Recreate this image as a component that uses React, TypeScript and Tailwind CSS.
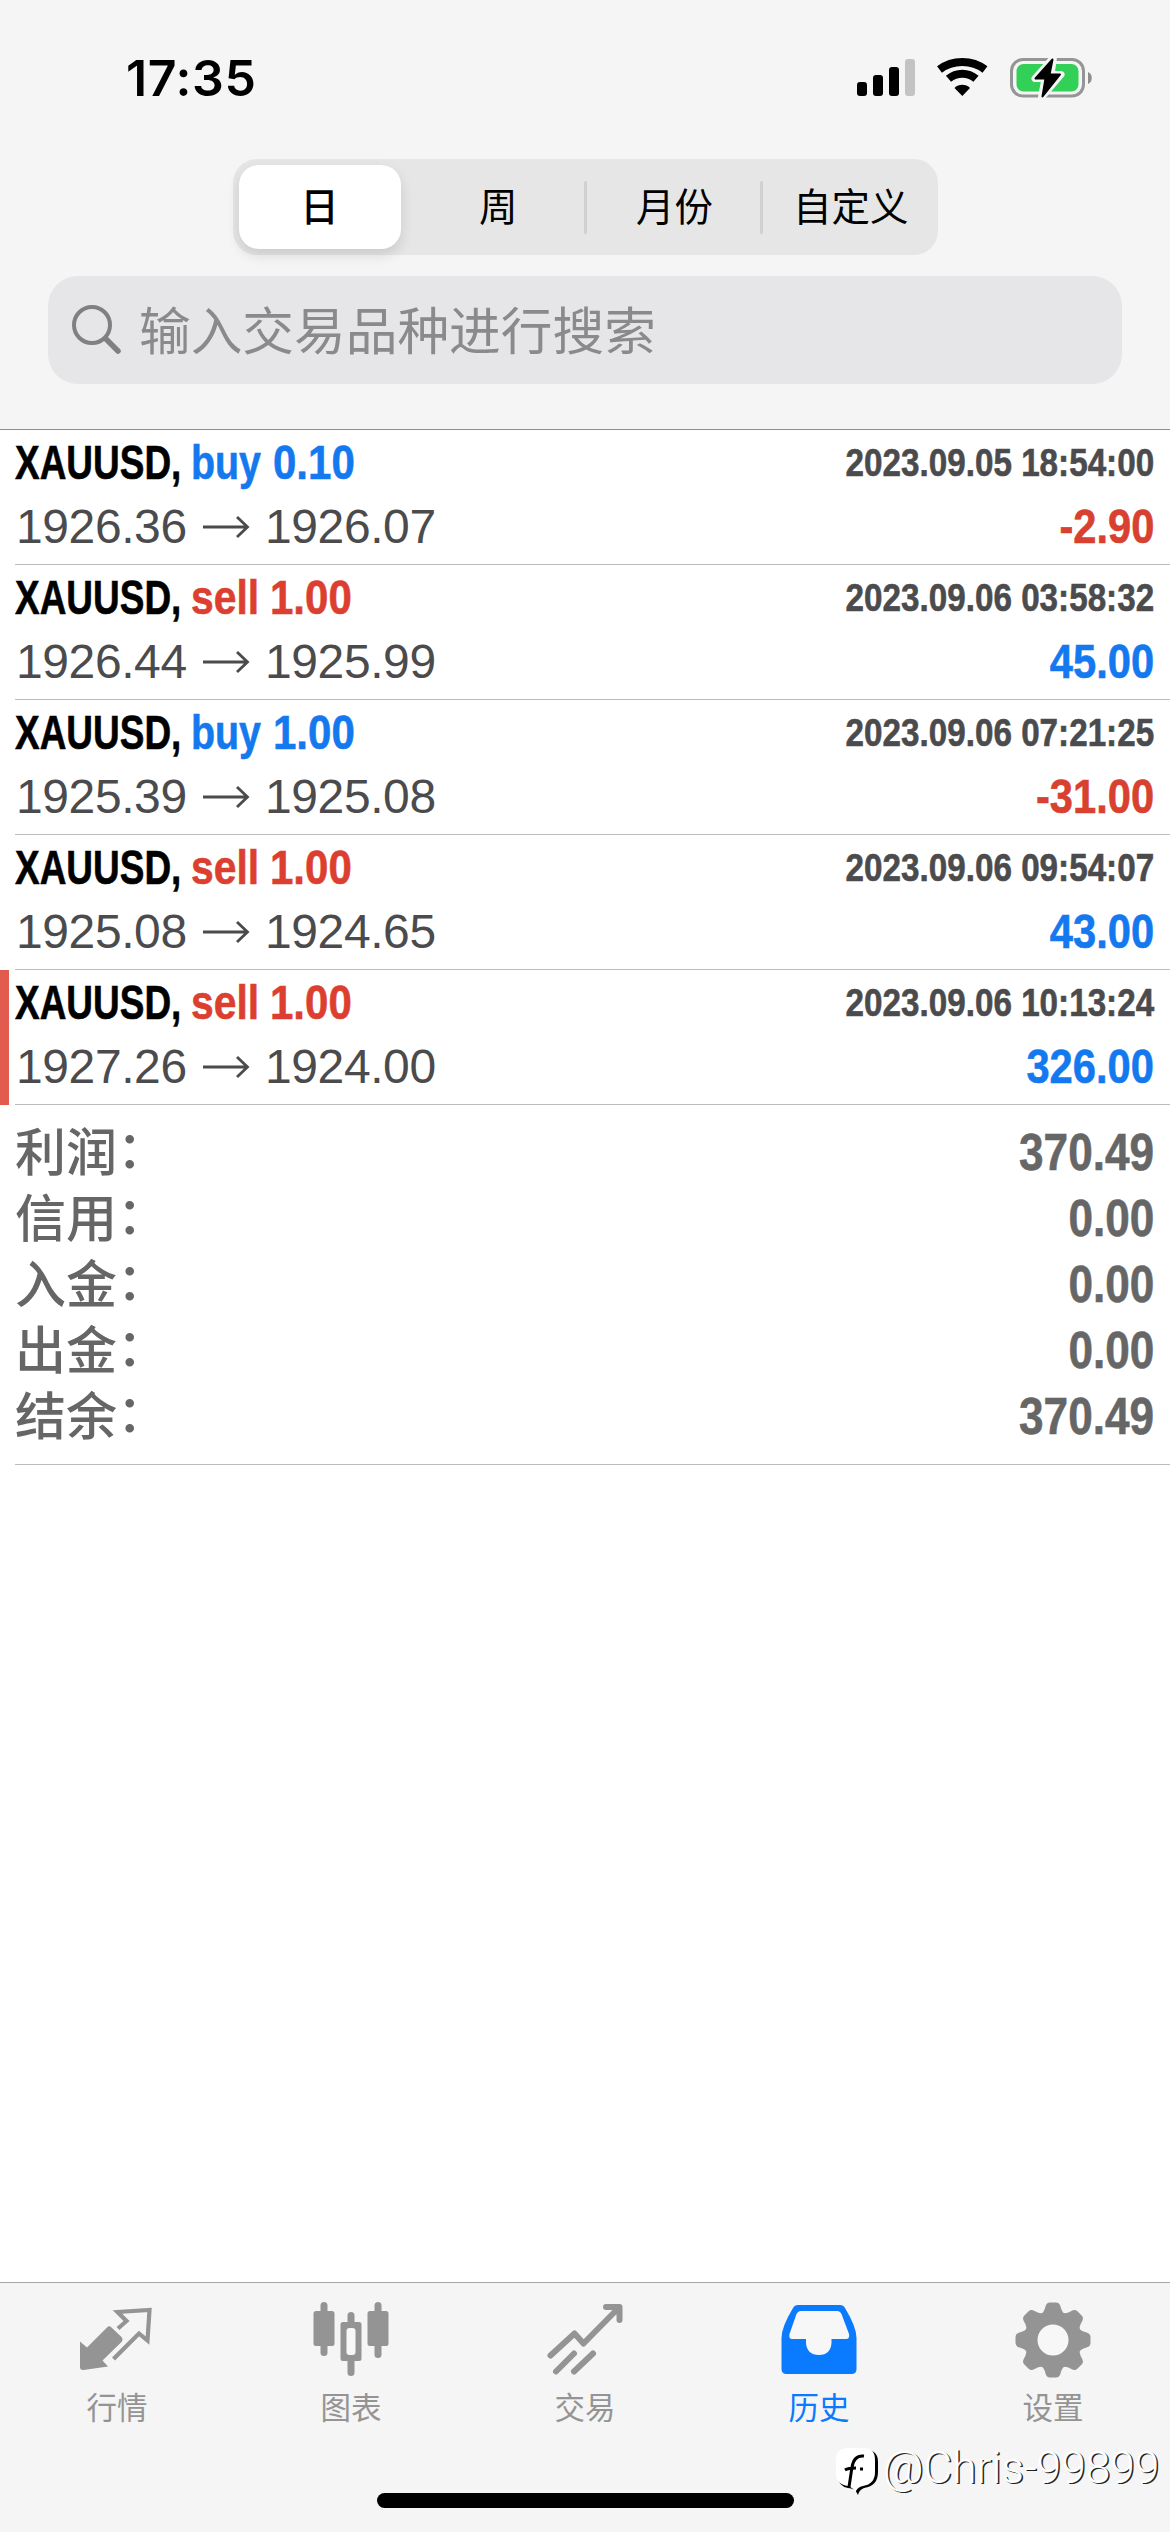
import { clsx } from "clsx";

type Deal = {
  side: "buy" | "sell";
  volume: string;
  open: string;
  close: string;
  time: string;
  profit: string;
  marked?: boolean;
};

const DEALS: Deal[] = [
  { side: "buy", volume: "0.10", open: "1926.36", close: "1926.07", time: "2023.09.05 18:54:00", profit: "-2.90" },
  { side: "sell", volume: "1.00", open: "1926.44", close: "1925.99", time: "2023.09.06 03:58:32", profit: "45.00" },
  { side: "buy", volume: "1.00", open: "1925.39", close: "1925.08", time: "2023.09.06 07:21:25", profit: "-31.00" },
  { side: "sell", volume: "1.00", open: "1925.08", close: "1924.65", time: "2023.09.06 09:54:07", profit: "43.00" },
  { side: "sell", volume: "1.00", open: "1927.26", close: "1924.00", time: "2023.09.06 10:13:24", profit: "326.00", marked: true },
];

const SUMMARY = [
  { label: "利润", value: "370.49" },
  { label: "信用", value: "0.00" },
  { label: "入金", value: "0.00" },
  { label: "出金", value: "0.00" },
  { label: "结余", value: "370.49" },
];

const PERIODS = ["日", "周", "月份", "自定义"];

function StatusBar() {
  return (
    <div className="flex h-[159px] items-start justify-between pl-[126px] pr-[77px] pt-[54px]">
      <span className="font-['Inter',sans-serif] text-[50px] font-semibold leading-[48px] tracking-[0.6px] text-black">
        17:35
      </span>
      <svg width="238" height="44" viewBox="0 0 238 44">
        <rect x="2" y="28" width="10" height="14" rx="3" />
        <rect x="18" y="21" width="10" height="21" rx="3" />
        <rect x="34" y="13" width="10" height="29" rx="3" />
        <rect x="50" y="5" width="10" height="37" rx="3" fill="#c3c3c3" />
        <g fill="none" stroke="#000" strokeWidth="8">
          <path d="M84.500 15.500C97.500 5.500 117 5.500 130 15.500" />
          <path d="M93.500 24.800C101.500 18 113 18 121 24.800" />
        </g>
        <path d="M107.300 42L99.500 34C103.500 29.700 111 29.700 115 34Z" />
        <rect x="156.500" y="5.500" width="72" height="36.500" rx="11.500" fill="none" stroke="#959595" strokeWidth="3" />
        <rect x="161.500" y="10" width="62" height="27.500" rx="7" fill="#33d058" />
        <path d="M233 18c5 1.500 5 10.500 0 12z" fill="#8e8e8e" />
        <path
          d="M198.500 3.500L180 24.500H190L186.500 43.500L206 20.500H196Z"
          stroke="#f5f5f5"
          strokeWidth="7"
          strokeLinejoin="round"
          fill="#f5f5f5"
        />
        <path d="M197.500 5.500L180.500 24.500H190.500L187.500 42.500L205 20.500H194.500Z" stroke="#000" strokeWidth="2" strokeLinejoin="round" />
      </svg>
    </div>
  );
}

function PeriodSwitch() {
  return (
    <div className="mx-auto flex h-[96px] w-[705px] items-center rounded-[24px] bg-[#e6e6e6]">
      {PERIODS.map((period, i) => (
        <div key={period} className="flex flex-1 items-center">
          <button
            className={clsx(
              "flex h-[84px] flex-1 items-center justify-center pt-[1px] text-[38.500px] text-black",
              i === 0 && "ml-1.5 mr-2 rounded-[20px] bg-white font-medium shadow-[0_6px_14px_rgba(0,0,0,0.12)]",
              i > 0 && "pl-[3px]"
            )}
          >
            {period}
          </button>
          {(i === 1 || i === 2) && <span className="-ml-[1px] -mr-[2px] h-[53px] w-[3px] rounded-full bg-[#d0d0d1]" />}
        </div>
      ))}
    </div>
  );
}

function SearchField() {
  return (
    <div className="mx-12 mt-[21px] flex h-[108px] items-center rounded-[30px] bg-[#e6e6e8] pl-6 text-[#8a8a8d]">
      <svg width="50" height="50" viewBox="0 0 50 50" fill="none" stroke="#808083" strokeLinecap="round">
        <circle cx="20" cy="20" r="18" strokeWidth="4" />
        <path d="M33.500 33.500L46 46" strokeWidth="5.500" />
      </svg>
      <span className="ml-[17px] pt-[5px] text-[51.700px]">输入交易品种进行搜索</span>
    </div>
  );
}

function Arrow() {
  return (
    <svg className="ml-[13px] mr-[15px]" width="48" height="24" viewBox="0 0 48 24" fill="none" stroke="#4b4b4d" strokeWidth="2.800">
      <path d="M1 12H45M35 2L45.500 12L35 22" />
    </svg>
  );
}

function DealRow({ deal }: { deal: Deal }) {
  return (
    <div className={clsx("flex h-[135px] border-l-[9px]", deal.marked ? "border-[#e15b4f]" : "border-transparent")}>
      <div className="ml-1.5 flex flex-1 flex-col border-b border-[#bcbcbf] pr-4">
        <div className="flex h-[66px] items-center text-[48px] font-bold leading-[60px] [-webkit-text-stroke:0.6px]">
          <span className="w-[176px] origin-left scale-x-[0.77] whitespace-nowrap text-black">XAUUSD,</span>
          <span className={clsx("flex", deal.side === "buy" ? "text-[#1478ee]" : "text-[#dc3f30]")}>
            <span className={clsx("origin-left", deal.side === "buy" ? "w-[82px] scale-x-[0.82]" : "w-[79px] scale-x-[0.85]")}>
              {deal.side}
            </span>
            <span className="origin-left scale-x-[0.875]">{deal.volume}</span>
          </span>
          <span className="ml-auto origin-right scale-x-[0.852] pb-[1px] text-[39px] text-[#4b4b4d]">{deal.time}</span>
        </div>
        <div className="flex h-[62px] items-center text-[48px] leading-[60px]">
          <span className="flex items-center pl-[1px] tracking-[-0.400px] text-[#4b4b4d]">
            <span className="w-[173px]">{deal.open}</span>
            <Arrow />
            {deal.close}
          </span>
          <span
            className={clsx(
              "ml-auto origin-right scale-x-[0.868] font-bold [-webkit-text-stroke:0.6px]",
              deal.profit.startsWith("-") ? "text-[#d8402f]" : "text-[#1478ee]"
            )}
          >
            {deal.profit}
          </span>
        </div>
      </div>
    </div>
  );
}

function Summary() {
  return (
    <div className="ml-[15px] h-[360px] border-b border-[#bcbcbf] pr-4 pt-[15px] text-[51px] leading-[66px] text-[#666]">
      {SUMMARY.map((item) => (
        <div key={item.label} className="flex h-[66px] items-center justify-between">
          <span className="flex translate-y-[1px] font-medium">
            {item.label}
            <span className="-translate-y-[3px]">：</span>
          </span>
          <span className="origin-right scale-x-[0.865] font-bold [-webkit-text-stroke:0.6px]">{item.value}</span>
        </div>
      ))}
    </div>
  );
}

function QuotesIcon() {
  return (
    <svg width="76" height="76" viewBox="0 0 76 76">
      <path d="M1 39.500L8 45.500L28 25.500Q30 23 32.500 25.500L42.500 35Q44.500 37.500 42.500 40L23.500 58.500L29 64.500L4.500 68Q1 68.500 1 65Z" fill="currentColor" />
      <path d="M39 26.500L47.500 19L38.500 10L70.500 8L68.500 38.500L60 31.500L34.500 57" fill="none" stroke="currentColor" strokeWidth="4.200" />
    </svg>
  );
}

function ChartIcon() {
  return (
    <svg width="76" height="76" viewBox="0 0 76 76" fill="currentColor">
      <rect x="7.500" y="0" width="7" height="54" rx="3.500" />
      <rect x="0.500" y="9" width="21" height="35" rx="2.500" />
      <rect x="34.500" y="10" width="7" height="64" rx="3.500" />
      <rect x="27.500" y="20" width="21" height="39" rx="2.500" />
      <rect x="33.500" y="26" width="9" height="27" rx="3" fill="#f7f7f7" />
      <rect x="61.500" y="0" width="7" height="56" rx="3.500" />
      <rect x="54.500" y="9" width="21" height="35" rx="2.500" />
    </svg>
  );
}

function TradeIcon() {
  return (
    <svg width="76" height="76" viewBox="0 0 76 76" fill="none" stroke="currentColor" strokeWidth="6" strokeLinecap="round" strokeLinejoin="round">
      <path d="M3.500 53.500L27.500 31.500L36.500 41.500L71.500 6M59 5H72.500V18" />
      <path d="M9 69.500L27 51.500M27 69.500L46 51.500" />
    </svg>
  );
}

function HistoryIcon() {
  return (
    <svg width="76" height="76" viewBox="0 0 76 76">
      <path
        d="M17 3H59Q62.500 3 64 6Q75.500 25 75.500 36V67Q75.500 72 70.500 72H5.500Q0.500 72 0.500 67V36Q0.500 25 12 6Q13.500 3 17 3Z"
        fill="currentColor"
      />
      <path
        d="M20 9H56Q59 9 60.500 12L68 32Q69 37 65 37H50.500V41Q49.500 53 38 53Q26 53 25 41V37H11Q7.500 37 8.500 32L15.500 12Q17 9 20 9Z"
        fill="#f7f7f7"
      />
    </svg>
  );
}

function SettingsIcon() {
  return (
    <svg width="76" height="76" viewBox="0 0 76 76" fill="currentColor">
      {[0, 45, 90, 135, 180, 225, 270, 315].map((angle) => (
        <path
          key={angle}
          transform={`rotate(${angle} 38 38)`}
          d="M25 12.500Q29 11 30.500 4.500Q31.500 0.500 35 0.500H41Q44.500 0.500 45.500 4.500Q47 11 51 12.500L46 24H30Z"
        />
      ))}
      <circle cx="38" cy="38" r="28" />
      <circle cx="38" cy="38" r="15.500" fill="#f7f7f7" />
    </svg>
  );
}

const TABS = [
  { label: "行情", Icon: QuotesIcon },
  { label: "图表", Icon: ChartIcon },
  { label: "交易", Icon: TradeIcon },
  { label: "历史", Icon: HistoryIcon, active: true },
  { label: "设置", Icon: SettingsIcon },
];

function TabBar() {
  return (
    <nav className="flex h-[250px] flex-col items-center border-t border-[#a7a7a9] bg-[#f5f5f5]">
      <div className="flex w-full flex-1">
        {TABS.map(({ label, Icon, active }) => (
          <div
            key={label}
            className={clsx("flex flex-1 flex-col items-center pt-[19px]", active ? "text-[#0a7aff]" : "text-[#949494]")}
          >
            <Icon />
            <span className="mt-[8px] text-[30.500px] leading-[44px]">{label}</span>
          </div>
        ))}
      </div>
      <div className="mb-6 h-[15px] w-[417px] rounded-full bg-black" />
    </nav>
  );
}

function Watermark() {
  return (
    <div className="absolute left-[836px] top-[2440px] flex items-center">
      <svg width="46" height="56" viewBox="0 0 46 56">
        <path d="M12 10H30Q42 10 42 22V32Q42 46 28 48Q23 50 22 55Q19 48 12 48Q2 46 2 36V20Q2 10 12 10Z" fill="#000" />
        <path d="M12 8H28Q39 8 39 20V32Q39 44 27 46Q21 47 19 53Q18 48 12 46Q0 44 0 34V20Q0 8 12 8Z" fill="#fff" />
        <path d="M28 16Q18 15 16 27L13 47M9 30Q12 28 20 28M24 29H27" fill="none" stroke="#000" strokeWidth="3" />
      </svg>
      <span className="ml-[1px] font-['Roboto',sans-serif] text-[44.300px] font-light leading-[56px] text-white [text-shadow:1.500px_1px_0_#222]">
        @Chris-99899
      </span>
    </div>
  );
}

export default function App() {
  return (
    <div className="relative flex h-[2532px] w-[1170px] flex-col overflow-hidden bg-white font-['Liberation_Sans','Noto_Sans_CJK_SC',sans-serif]">
      <header className="h-[430px] border-b border-[#8e8e90] bg-[#f5f5f5]">
        <StatusBar />
        <PeriodSwitch />
        <SearchField />
      </header>
      <main className="flex-1 bg-white">
        {DEALS.map((deal) => (
          <DealRow key={deal.time} deal={deal} />
        ))}
        <Summary />
      </main>
      <TabBar />
      <Watermark />
    </div>
  );
}
